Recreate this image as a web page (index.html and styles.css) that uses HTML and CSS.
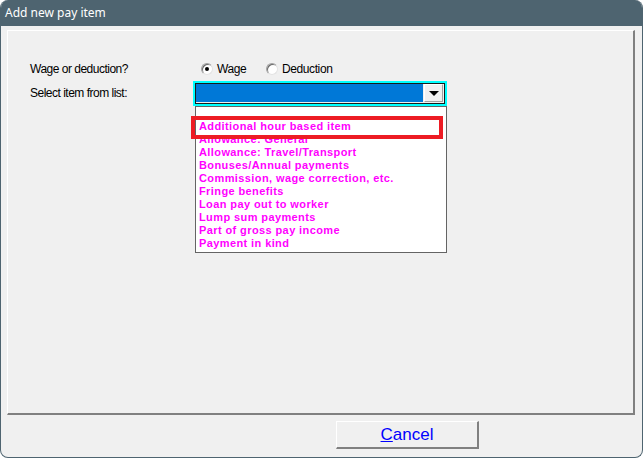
FILE: index.html
```html
<!DOCTYPE html>
<html lang="en">
<head>
    <meta charset="UTF-8">
    <title>Add new pay item</title>
    <link rel="stylesheet" href="styles.css">
</head>
<body>
    <div class="dialog">
        <div class="dialog-title">Add new pay item</div>
        <div class="dialog-body">
            <div class="group-panel">
                <div class="form-row">
                    <div class="form-label">Wage or deduction?</div>
                    <div class="radio-group">
                        <label class="radio radio-wage"><span class="radio-dot checked"></span>Wage</label>
                        <label class="radio"><span class="radio-dot"></span>Deduction</label>
                    </div>
                </div>
                <div class="form-row combo-row">
                    <div class="form-label combo-label">Select item from list:</div>
                    <div class="combo-wrap">
                        <div class="combo">
                            <div class="combo-inner">
                                <div class="combo-field"></div>
                                <div class="combo-button"><span class="combo-arrow"></span></div>
                            </div>
                        </div>
                        <ul class="combo-list">
                            <li class="blank"></li>
                            <li>Additional hour based item</li>
                            <li>Allowance: General</li>
                            <li>Allowance: Travel/Transport</li>
                            <li>Bonuses/Annual payments</li>
                            <li>Commission, wage correction, etc.</li>
                            <li>Fringe benefits</li>
                            <li>Loan pay out to worker</li>
                            <li>Lump sum payments</li>
                            <li>Part of gross pay income</li>
                            <li>Payment in kind</li>
                        </ul>
                        <!-- highlight frame around the first entry -->
                        <div class="mark-box"></div>
                    </div>
                </div>
            </div>
            <div class="dialog-footer">
                <button class="cancel-btn"><u>C</u>ancel</button>
            </div>
        </div>
    </div>
</body>
</html>
```

FILE: styles.css
```css
* {
    box-sizing: border-box;
}

body {
    margin: 0;
    background: #ffffff;
    font-family: "Liberation Sans", Arial, sans-serif;
}

.dialog {
    width: 643px;
    height: 458px;
    background: #f0f0f0;
    border: 1px solid #4e6470;
    border-top: none;
    border-radius: 8px;
    overflow: hidden;
}

.dialog-title {
    height: 26px;
    background: #4e6470;
    color: #ffffff;
    font-family: "Noto Sans", sans-serif;
    font-size: 12px;
    line-height: 26px;
    padding-left: 4px;
}

.dialog-body {
    padding: 4px 7px 0 6px;
}

.group-panel {
    height: 385px;
    border-top: 1px solid #ffffff;
    border-left: 1px solid #ffffff;
    border-right: 2px solid #808080;
    border-bottom: 2px solid #808080;
    padding: 31px 0 0 22px;
}

.form-row {
    display: flex;
    font-size: 12px;
    color: #000000;
}

.form-label {
    width: 163px;
    line-height: 14px;
    letter-spacing: -0.5px;
}

.radio-group {
    display: flex;
    margin-left: 8px;
    line-height: 14px;
    letter-spacing: -0.4px;
}

.radio {
    display: flex;
    align-items: center;
    gap: 4px;
}

.radio-wage {
    width: 65px;
}

.radio-dot {
    width: 12px;
    height: 12px;
    border-radius: 50%;
    background: #ffffff;
    border: 1px solid #a0a0a0;
    border-right-color: #e3e3e3;
    border-bottom-color: #e3e3e3;
    box-shadow: inset 1px 1px 0 #696969;
    display: flex;
    align-items: center;
    justify-content: center;
}

.radio-dot.checked::after {
    content: "";
    width: 4px;
    height: 4px;
    border-radius: 50%;
    background: #000000;
}

.combo-row {
    margin-top: 5px;
    align-items: flex-start;
}

.combo-label {
    line-height: 25px;
}

.combo-wrap {
    position: relative;
}

.combo {
    width: 254px;
    height: 25px;
    border: 2px solid #00ffff;
}

.combo-inner {
    height: 100%;
    border: 1px solid #1a1a1a;
    display: flex;
    background: #f0f0f0;
}

.combo-field {
    flex: 1;
    background: #0078d7;
    margin: 0 0 1px 0;
}

.combo-button {
    width: 19px;
    margin: 0 1px 1px 1px;
    border-top: 1px solid #ffffff;
    border-left: 1px solid #ffffff;
    border-right: 1px solid #a0a0a0;
    border-bottom: 1px solid #a0a0a0;
    display: flex;
    align-items: center;
    justify-content: center;
}

.combo-arrow {
    width: 0;
    height: 0;
    border-left: 5px solid transparent;
    border-right: 5px solid transparent;
    border-top: 5px solid #000000;
    margin-top: 1px;
}

.combo-list {
    list-style: none;
    margin: 0 0 0 2px;
    padding: 0;
    width: 252px;
    height: 147px;
    background: #ffffff;
    border: 1px solid #646464;
}

.combo-list li {
    height: 13px;
    line-height: 13px;
    padding-left: 3px;
    font-size: 11px;
    font-weight: bold;
    letter-spacing: 0.4px;
    color: #ff00ff;
    white-space: nowrap;
}

.mark-box {
    position: absolute;
    left: -2px;
    top: 35px;
    width: 252px;
    height: 23px;
    border: 4px solid #ed1c24;
}

.dialog-footer {
    padding: 6px 0 0 329px;
}

.cancel-btn {
    width: 143px;
    height: 28px;
    background: #f0f0f0;
    border-top: 1px solid #ffffff;
    border-left: 1px solid #ffffff;
    border-right: 2px solid #808080;
    border-bottom: 2px solid #808080;
    font-family: "Liberation Sans", Arial, sans-serif;
    font-size: 17px;
    color: #0000ff;
    padding: 0;
}
```
